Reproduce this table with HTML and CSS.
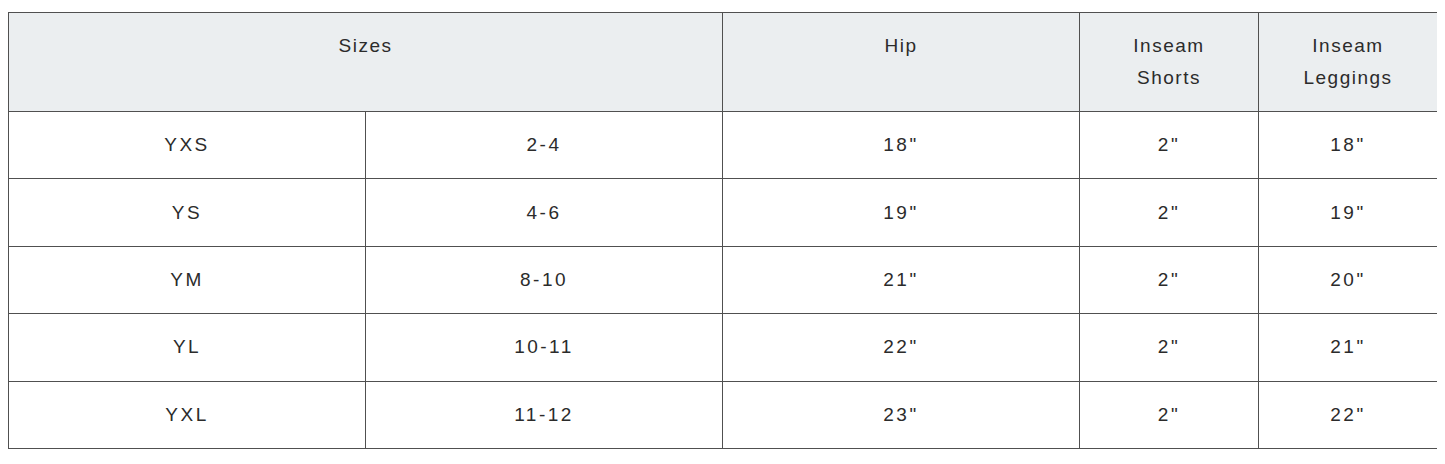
FILE: index.html
```html
<!DOCTYPE html>
<html>
<head>
<meta charset="utf-8">
<link rel="stylesheet" href="styles.css">
</head>
<body>
<table class="size-table">
  <colgroup>
    <col class="col-wide">
    <col class="col-wide">
    <col class="col-wide">
    <col class="col-narrow">
    <col class="col-narrow">
  </colgroup>
  <thead>
    <tr>
      <th colspan="2">Sizes</th>
      <th>Hip</th>
      <th>Inseam<br>Shorts</th>
      <th>Inseam<br>Leggings</th>
    </tr>
  </thead>
  <tbody>
    <tr><td>YXS</td><td>2-4</td><td>18"</td><td>2"</td><td>18"</td></tr>
    <tr><td>YS</td><td>4-6</td><td>19"</td><td>2"</td><td>19"</td></tr>
    <tr><td>YM</td><td>8-10</td><td>21"</td><td>2"</td><td>20"</td></tr>
    <tr><td>YL</td><td>10-11</td><td>22"</td><td>2"</td><td>21"</td></tr>
    <tr><td>YXL</td><td>11-12</td><td>23"</td><td>2"</td><td>22"</td></tr>
  </tbody>
</table>
</body>
</html>
```
FILE: styles.css
```css
body {
  margin: 12px 8px 8px 8px;
  background: #ffffff;
  font-family: "Liberation Sans", Arial, sans-serif;
  color: #2b2b2b;
}
.size-table {
  width: 1429px;
  border-collapse: collapse;
  table-layout: fixed;
  border: 1px solid #505050;
}
.col-wide { width: 357px; }
.col-narrow { width: 179px; }
.size-table th,
.size-table td {
  border: 1px solid #505050;
  text-align: center;
  font-size: 19px;
  letter-spacing: 2.5px;
}
.size-table th {
  background: #ebeef0;
  font-weight: normal;
  vertical-align: top;
  line-height: 32px;
  letter-spacing: 1.5px;
  padding: 17px 4px 17px;
  height: 64px;
}
.size-table td {
  vertical-align: middle;
  height: 66.4px;
  padding: 0 4px;
}
```
